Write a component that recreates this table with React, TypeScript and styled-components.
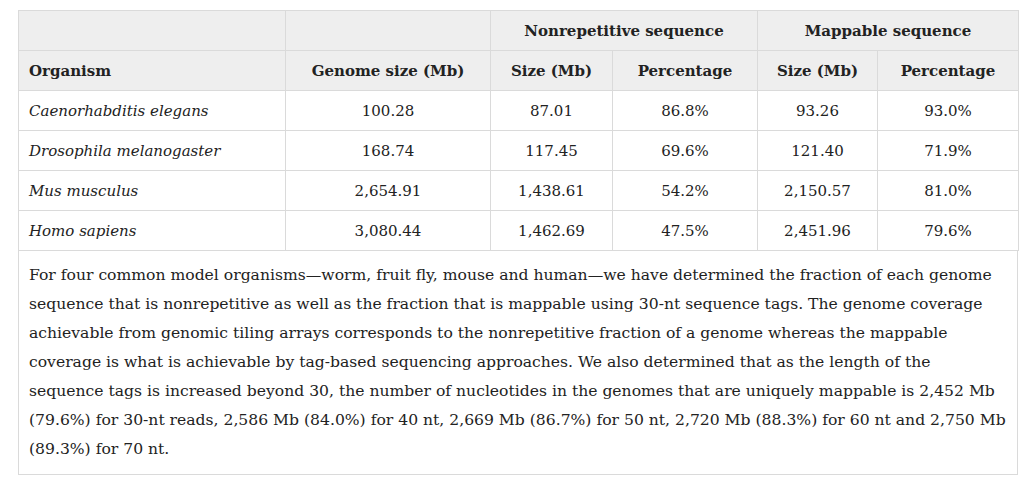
import React from "react";
import styled, { createGlobalStyle } from "styled-components";

const Global = createGlobalStyle`
  html, body { margin: 0; padding: 0; background: #fff; }
  body { font-family: "DejaVu Serif", "Liberation Serif", serif; color: #222; }
`;

const Wrap = styled.div`
  padding: 10px 11px 0 18px;
  width: 1000px;
`;

const Table = styled.table`
  border-collapse: collapse;
  width: 1000px;
  table-layout: fixed;
  font-size: 15px;
`;

const Th = styled.th<{ $align?: string }>`
  background: #eeeeee;
  border: 1px solid #dadada;
  height: 39px;
  padding: 0 10px;
  font-weight: 700;
  text-align: ${(p) => p.$align || "center"};
  color: #222;
`;

const Td = styled.td<{ $italic?: boolean }>`
  border: 1px solid #dadada;
  height: 39px;
  padding: 0 10px;
  text-align: ${(p) => (p.$italic ? "left" : "center")};
  font-style: ${(p) => (p.$italic ? "italic" : "normal")};
  color: #222;
`;

const Caption = styled.div`
  border: 1px solid #dadada;
  border-top: none;
  padding: 10px;
  font-size: 15.6px;
  line-height: 29px;
  color: #222;
`;

const Line = styled.span`
  display: block;
  white-space: nowrap;
`;

const rows = [
  ["Caenorhabditis elegans", "100.28", "87.01", "86.8%", "93.26", "93.0%"],
  ["Drosophila melanogaster", "168.74", "117.45", "69.6%", "121.40", "71.9%"],
  ["Mus musculus", "2,654.91", "1,438.61", "54.2%", "2,150.57", "81.0%"],
  ["Homo sapiens", "3,080.44", "1,462.69", "47.5%", "2,451.96", "79.6%"],
];

const captionLines = [
  "For four common model organisms—worm, fruit fly, mouse and human—we have determined the fraction of each genome",
  "sequence that is nonrepetitive as well as the fraction that is mappable using 30-nt sequence tags. The genome coverage",
  "achievable from genomic tiling arrays corresponds to the nonrepetitive fraction of a genome whereas the mappable",
  "coverage is what is achievable by tag-based sequencing approaches. We also determined that as the length of the",
  "sequence tags is increased beyond 30, the number of nucleotides in the genomes that are uniquely mappable is 2,452 Mb",
  "(79.6%) for 30-nt reads, 2,586 Mb (84.0%) for 40 nt, 2,669 Mb (86.7%) for 50 nt, 2,720 Mb (88.3%) for 60 nt and 2,750 Mb",
  "(89.3%) for 70 nt.",
];

export default function App() {
  return (
    <Wrap>
      <Global />
      <Table>
        <colgroup>
          <col style={{ width: 267 }} />
          <col style={{ width: 205 }} />
          <col style={{ width: 122 }} />
          <col style={{ width: 145 }} />
          <col style={{ width: 120 }} />
          <col style={{ width: 141 }} />
        </colgroup>
        <thead>
          <tr>
            <Th />
            <Th />
            <Th colSpan={2}>Nonrepetitive sequence</Th>
            <Th colSpan={2}>Mappable sequence</Th>
          </tr>
          <tr>
            <Th $align="left">Organism</Th>
            <Th>Genome size (Mb)</Th>
            <Th>Size (Mb)</Th>
            <Th>Percentage</Th>
            <Th>Size (Mb)</Th>
            <Th>Percentage</Th>
          </tr>
        </thead>
        <tbody>
          {rows.map((r) => (
            <tr key={r[0]}>
              {r.map((c, i) => (
                <Td key={i} $italic={i === 0}>
                  {c}
                </Td>
              ))}
            </tr>
          ))}
        </tbody>
      </Table>
      <Caption>
        {captionLines.map((l) => (
          <Line key={l}>{l}</Line>
        ))}
      </Caption>
    </Wrap>
  );
}
